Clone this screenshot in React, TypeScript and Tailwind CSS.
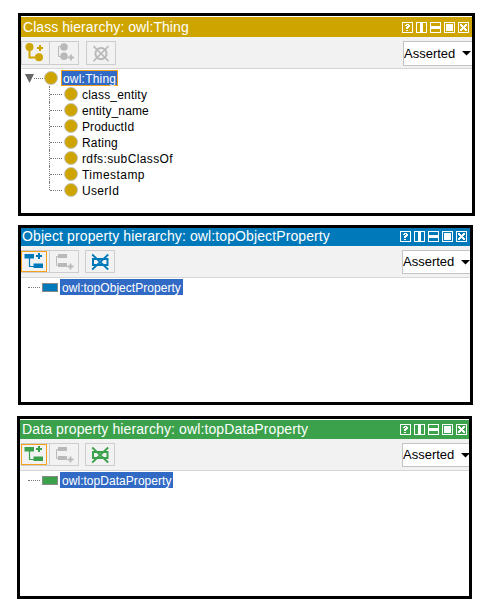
import React from "react";

type Kind = "class" | "object" | "data";

function HeaderIcons() {
  return (
    <svg className="shrink-0" width="68" height="12" viewBox="0 0 68 12" fill="none" stroke="#fff" shapeRendering="crispEdges">
      <path d="M.5 .5h10v10h-10zM14.5 .5h10v10h-10zM28.5 .5h10v10h-10zM42.5 .5h10v10h-10zM56.5 .5h10v10h-10z" />
      <g fill="#fff" stroke="none">
        <path d="M4 2h3v1h1v2h-1v1h-1v1h-2v-2h1v-1h1v-1h-1v1h-2v-1h1zM4 8h2v1h-2z" />
        <path d="M18 1h3v9h-3zM29 4h9v3h-9zM44 2h7v7h-7z" />
        <path d="M58 2h2v1h1v1h1v-1h1v-1h2v2h-1v1h-1v1h1v1h1v2h-2v-1h-1v-1h-1v1h-1v1h-2v-2h1v-1h1v-1h-1v-1h-1z" />
      </g>
    </svg>
  );
}

function AddChild({ kind, color }: { kind: Kind; color: string }) {
  return kind === "class" ? (
    <svg width="22" height="22" viewBox="0 0 22 22" fill={color}>
      <circle cx="6.5" cy="5" r="4" />
      <circle cx="16" cy="15.3" r="4" />
      <path d="M6.5 8v7.5H12M14 6h6M17 3v6" fill="none" stroke={color} strokeWidth="2" />
    </svg>
  ) : (
    <svg width="21" height="21" viewBox="0 0 21 21" fill={color}>
      <path d="M1.5 3h9.5v4.5h-9.5zM10.5 12.5h9.5v4.5h-9.5z" />
      <path d="M6.5 7v8.5H11" fill="none" stroke={color} strokeWidth="1.2" />
      <path d="M13 5h6M16 2v6" fill="none" stroke={color} strokeWidth="2" />
    </svg>
  );
}

function AddSibling({ kind }: { kind: Kind }) {
  const c = "#b9b9b9";
  return kind === "class" ? (
    <svg width="21" height="22" viewBox="0 0 21 22" fill={c}>
      <circle cx="10" cy="5" r="3.8" />
      <circle cx="10" cy="14.3" r="3.8" />
      <path d="M8 4.5H4.5v10H8" fill="none" stroke={c} />
      <path d="M14 15.5h6M17 12.5v6" fill="none" stroke={c} strokeWidth="1.8" />
    </svg>
  ) : (
    <svg width="21" height="21" viewBox="0 0 21 21" fill={c}>
      <path d="M4 3h9v4H4zM4 12h9v4H4z" />
      <path d="M5 5.5H2.5v9H5" fill="none" stroke={c} />
      <path d="M13.5 15.5h6M16.5 12.5v6" fill="none" stroke={c} strokeWidth="1.8" />
    </svg>
  );
}

function Remove({ kind, color }: { kind: Kind; color: string }) {
  return kind === "class" ? (
    <svg width="22" height="22" viewBox="0 0 22 22" fill="none" stroke="#b9b9b9" strokeWidth="1.5">
      <circle cx="11" cy="11.6" r="5.6" strokeWidth="2" />
      <path d="M3.5 4.1l15 15M18.5 4.1l-15 15" />
    </svg>
  ) : (
    <svg width="22" height="21" viewBox="0 0 22 21" fill="none" stroke={color}>
      <path d="M4 8h14.5v6h-14.5z" strokeWidth="2" />
      <path d="M3.2 3.5l16 15M19.2 3.5l-16 15" strokeWidth="1.8" />
    </svg>
  );
}

const toolbarSize = {
  class: "pb-[3px]",
  object: "pb-[4px]",
  data: "pb-[4px] pl-px",
};

const selectSize = {
  class: "w-[69px] h-[25px]",
  object: "w-[68px] h-[24px]",
  data: "w-[67px] h-[24px]",
};

function Toolbar({ kind, color }: { kind: Kind; color: string }) {
  const btn = "flex h-full items-center justify-center border border-[#cdcdcd] shrink-0 ";
  return (
    <div className={"flex h-[32px] shrink-0 border-b border-[#d6d6d6] bg-[#f2f2f2] pt-[4px] " + toolbarSize[kind]}>
      <div className={btn + "relative w-[29px]"}>
        {kind !== "class" && <span className="absolute -left-px top-0 h-[21px] w-[26px] border border-[#f5a01c]" />}
        <span className="mr-auto pl-px">
          <AddChild kind={kind} color={color} />
        </span>
      </div>
      <div className={btn + "w-[29px] border-l-0"}>
        <AddSibling kind={kind} />
      </div>
      <div className={btn + (kind === "class" ? "ml-[7px] w-[30px]" : "ml-[6px] w-[30px]")}>
        <Remove kind={kind} color={color} />
      </div>
      <div className={"ml-auto flex items-center overflow-hidden border border-r-0 border-[#c4c4c4] bg-white text-[13px] text-black " + selectSize[kind]}>
        <span className="w-[52px] shrink-0">Asserted</span>
        <svg className="ml-[6px] shrink-0" width="9" height="5" viewBox="0 0 9 5">
          <path d="M0 0h9L4.5 4.5z" />
        </svg>
      </div>
    </div>
  );
}

function Dots() {
  return <span className="w-3 shrink-0 border-t border-dotted border-[#777]" />;
}

function Title({ text, className }: { text: string; className: string }) {
  return (
    <div className={"flex shrink-0 items-center justify-between whitespace-nowrap text-white " + className}>
      <span className="pb-[2px] text-[14px] leading-[16px]">{text}</span>
      <HeaderIcons />
    </div>
  );
}

function PropertyRow({ color, label }: { color: string; label: string }) {
  return (
    <div className="flex h-4 items-center pl-[7px]">
      <Dots />
      <span className="ml-[2px] h-[9px] w-4 shrink-0 border border-[#888]" style={{ backgroundColor: color }} />
      <span className="ml-[2px] h-4 bg-[#316ac5] pl-[2px] pr-[2px] text-[12px] leading-[18px] tracking-[0.04px] text-white">{label}</span>
    </div>
  );
}

const children = [
  { name: "class_entity", tracking: "tracking-[0.2px]" },
  { name: "entity_name", tracking: "tracking-[0.14px]" },
  { name: "ProductId", tracking: "tracking-[0.1px]" },
  { name: "Rating", tracking: "tracking-[0.2px]" },
  { name: "rdfs:subClassOf", tracking: "tracking-[0.37px]" },
  { name: "Timestamp", tracking: "tracking-[0.45px]" },
  { name: "UserId", tracking: "tracking-[0.3px]" },
];

export default function App() {
  return (
    <main className="flex h-[612px] w-[489px] flex-col overflow-hidden bg-white pt-[13px] font-['Liberation_Sans',Arial,sans-serif] text-black">
      <section className="ml-[18px] flex h-[203px] w-[457px] shrink-0 flex-col border-[3px] border-black">
        <Title text="Class hierarchy: owl:Thing" className="mt-px h-[20px] bg-[#cea500] pl-[2px] pr-[2px] pt-px tracking-[0.06px]" />
        <Toolbar kind="class" color="#cea500" />
        <div className="mt-[1px] flex h-4 items-center pl-[4px]">
          <svg width="9" height="9" viewBox="0 0 9 9">
            <path d="M0 0h9L4.5 9z" fill="#666" />
          </svg>
          <span className="w-[9px] border-t border-dotted border-[#777]" />
          <span className="ml-px h-[14px] w-[14px] rounded-full border border-[#c4c4c4] bg-[#cea500]" />
          <span className="ml-[3px] h-4 w-[57px] border border-[#f2a01c] bg-[#316ac5] pl-px text-[12px] leading-4 tracking-[0.2px] text-white">owl:Thing</span>
        </div>
        <div className="ml-[28px] flex flex-col">
          {children.map(({ name, tracking }, i) => (
            <div key={name} className="flex h-4 items-center">
              <span className={"w-px shrink-0 border-l border-dotted border-[#777] " + (i === 6 ? "h-2 self-start" : "h-4")} />
              <Dots />
              <span className="ml-[2px] h-[14px] w-[14px] shrink-0 rounded-full border border-[#c4c4c4] bg-[#cea500]" />
              <span className={"ml-[4px] h-4 text-[12px] leading-[18px] " + tracking}>{name}</span>
            </div>
          ))}
        </div>
      </section>

      <section className="ml-[18px] mt-[9px] flex h-[180px] w-[455px] shrink-0 flex-col border-[3px] border-black">
        <Title text="Object property hierarchy: owl:topObjectProperty" className="h-[18px] bg-[#0079ba] pl-px pr-[2px] tracking-[0.11px]" />
        <Toolbar kind="object" color="#0079ba" />
        <div className="mt-px">
          <PropertyRow color="#0079ba" label="owl:topObjectProperty" />
        </div>
      </section>

      <section className="ml-[17px] mt-[11px] flex h-[183px] w-[455px] shrink-0 flex-col border-[3px] border-black">
        <Title text="Data property hierarchy: owl:topDataProperty" className="mt-px h-[19px] bg-[#3ba14b] pl-[2px] pr-px tracking-[0.12px]" />
        <Toolbar kind="data" color="#3ba14b" />
        <div className="mt-px pl-px">
          <PropertyRow color="#3ba14b" label="owl:topDataProperty" />
        </div>
      </section>
    </main>
  );
}
